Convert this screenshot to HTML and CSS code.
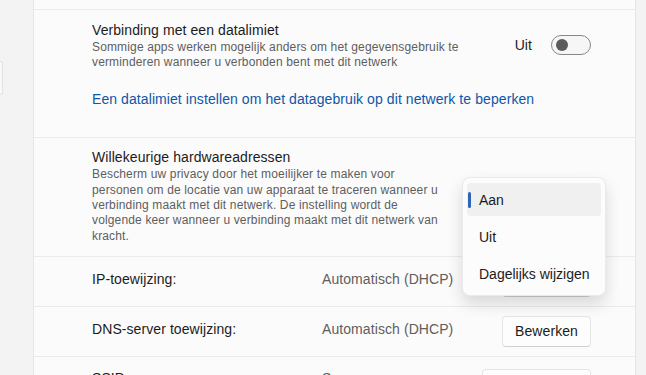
FILE: index.html
```html
<!DOCTYPE html>
<html lang="nl">
<head>
<meta charset="utf-8">
<title>Netwerkeigenschappen</title>
<link rel="stylesheet" href="styles.css">
</head>
<body>
<div class="window">
  <nav class="nav">
    <div class="nav-item"></div>
  </nav>
  <main class="content">
    <section class="card">
      <div class="row stub"></div>

      <div class="row setting metered">
        <div class="setting-head">
          <div class="setting-text">
            <div class="title">Verbinding met een datalimiet</div>
            <div class="desc">Sommige apps werken mogelijk anders om het gegevensgebruik te<br>verminderen wanneer u verbonden bent met dit netwerk</div>
          </div>
          <div class="control">
            <span class="state">Uit</span>
            <span class="toggle"><span class="knob"></span></span>
          </div>
        </div>
        <a class="link" href="#">Een datalimiet instellen om het datagebruik op dit netwerk te beperken</a>
      </div>

      <div class="row setting random">
        <div class="setting-head">
          <div class="setting-text">
            <div class="title">Willekeurige hardwareadressen</div>
            <div class="desc">Bescherm uw privacy door het moeilijker te maken voor<br>personen om de locatie van uw apparaat te traceren wanneer u<br>verbinding maakt met dit netwerk. De instelling wordt de<br>volgende keer wanneer u verbinding maakt met dit netwerk van<br>kracht.</div>
          </div>
          <div class="control">
            <span class="combo">Aan</span>
          </div>
        </div>
      </div>

      <div class="row prop">
        <span class="prop-label">IP-toewijzing:</span>
        <span class="prop-value">Automatisch (DHCP)</span>
        <span class="btn">Bewerken</span>
      </div>

      <div class="row prop">
        <span class="prop-label">DNS-server toewijzing:</span>
        <span class="prop-value">Automatisch (DHCP)</span>
        <span class="btn">Bewerken</span>
      </div>

      <div class="row prop ssid">
        <span class="prop-label">SSID:</span>
        <span class="prop-value">Samsung</span>
        <span class="btn wide">Kopiëren</span>
      </div>
    </section>
  </main>

  <div class="menu">
    <div class="menu-item selected"><span class="accent"></span>Aan</div>
    <div class="menu-item">Uit</div>
    <div class="menu-item">Dagelijks wijzigen</div>
  </div>
</div>
</body>
</html>
```
FILE: styles.css
```css
* { box-sizing: border-box; }

html, body {
  margin: 0;
  padding: 0;
}

body {
  width: 646px;
  height: 375px;
  overflow: hidden;
  background: #f3f3f3;
  font-family: "Liberation Sans", Arial, sans-serif;
  color: #1b1b1b;
  font-size: 14px;
  line-height: 20px;
}

.window {
  position: relative;
  display: flex;
  height: 375px;
}

.nav {
  width: 33px;
  flex: none;
  padding-top: 61px;
}

.nav-item {
  width: 3px;
  height: 34px;
  background: #f8f8f8;
  border: 1px solid #e2e2e2;
  border-left: none;
  border-radius: 0 4px 4px 0;
}

.content {
  flex: 1;
  padding-right: 10px;
}

.card {
  background: #fbfbfb;
  border-left: 1px solid #e5e5e5;
  border-right: 1px solid #e5e5e5;
}

.row {
  border-top: 1px solid #ebebeb;
  padding-left: 58px;
  padding-right: 44px;
  letter-spacing: 0.08px;
}

.row.stub {
  border-top: none;
  height: 9px;
}

.setting {
  padding-top: 9.5px;
}

.metered { padding-bottom: 27.9px; }
.random { padding-bottom: 12px; }

.setting-head {
  display: flex;
  align-items: center;
}

.setting-text {
  flex: 1;
}

.title {
  font-size: 14px;
  line-height: 20px;
  white-space: nowrap;
}

.desc {
  font-size: 12px;
  line-height: 15.3px;
  color: #5e5e5e;
  letter-spacing: 0.15px;
  white-space: nowrap;
}

.control {
  display: flex;
  align-items: center;
  gap: 19px;
}

.state {
  font-size: 14px;
}

.toggle {
  display: flex;
  align-items: center;
  width: 40px;
  height: 20px;
  padding-left: 4px;
  border: 1px solid #878787;
  border-radius: 10px;
  background: #f6f6f6;
}

.knob {
  width: 12px;
  height: 12px;
  border-radius: 50%;
  background: #5b5b5b;
}

.combo {
  display: block;
  width: 89px;
  height: 31px;
  border: 1px solid #e5e5e5;
  border-radius: 4px;
  background: #fdfdfd;
}

.link {
  display: block;
  margin-top: 19px;
  color: #0f56a8;
  text-decoration: none;
  white-space: nowrap;
}

.prop {
  display: flex;
  align-items: center;
  height: 50px;
}

.prop-label {
  width: 230px;
  flex: none;
  padding-bottom: 4px;
}

.prop-value {
  flex: 1;
  padding-bottom: 4px;
  color: #5e5e5e;
}

.btn {
  display: flex;
  align-items: center;
  justify-content: center;
  width: 89px;
  height: 31px;
  padding-bottom: 1px;
  border: 1px solid #e5e5e5;
  border-bottom-color: #d0d0d0;
  border-radius: 4px;
  background: #fdfdfd;
}

.btn.wide { width: 109px; }

.ssid {
  align-items: flex-start;
  height: 60px;
  padding-top: 11.5px;
}

.ssid .prop-label,
.ssid .prop-value { padding-bottom: 0; }

.ssid .btn { margin-top: 0.5px; }

.menu {
  position: absolute;
  left: 462px;
  top: 177px;
  width: 144px;
  padding: 5px 4px;
  display: flex;
  flex-direction: column;
  gap: 4px;
  background: #fcfcfc;
  border: 1px solid rgba(0, 0, 0, 0.07);
  border-radius: 8px;
  box-shadow: 0 8px 16px rgba(0, 0, 0, 0.14);
}

.menu-item {
  display: flex;
  align-items: center;
  height: 33px;
  padding-left: 12px;
  border-radius: 4px;
  white-space: nowrap;
}

.menu-item.selected {
  padding-left: 1px;
  background: #f0f0f0;
}

.accent {
  width: 3px;
  height: 16px;
  margin-right: 8px;
  border-radius: 2px;
  background: #2f64b7;
}
```
